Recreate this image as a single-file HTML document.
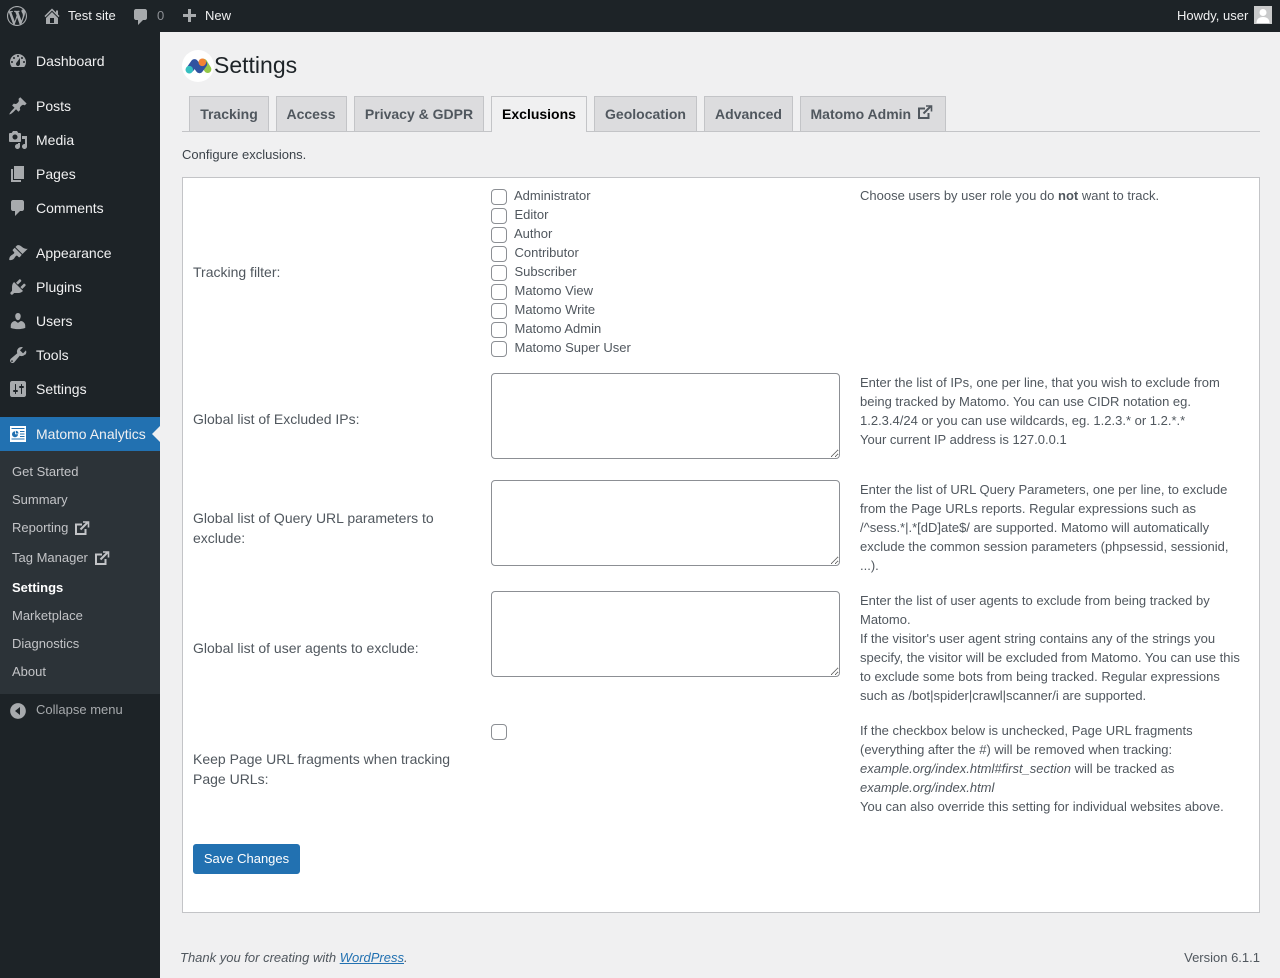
<!DOCTYPE html>
<html lang="en"><head><meta charset="utf-8"><title>Settings</title>
<style>
html,body{margin:0;padding:0;width:1280px;height:978px;overflow:hidden;background:#f0f0f1;font-family:"Liberation Sans",sans-serif;font-size:13px;color:#50575e}
.a{position:absolute;white-space:nowrap}
#bar{position:absolute;left:0;top:0;width:1280px;height:32px;background:#1d2327}
#side{position:absolute;left:0;top:32px;width:160px;height:946px;background:#1d2327}
#sub{position:absolute;left:0;top:451px;width:160px;height:243px;background:#2c3338}
#cur{position:absolute;left:0;top:417px;width:160px;height:34px;background:#2271b1}
.bt{font-size:13px;line-height:20px;color:#f0f0f1}
.m{left:36px;font-size:14px;line-height:20px;color:#f0f0f1}
.s{left:12px;font-size:13px;line-height:18px;color:#c3c4c7}
svg{position:absolute;overflow:visible}
.i{width:20px;height:20px;left:8px;fill:#a7aaad;fill-rule:evenodd}
.b{width:20px;height:20px;fill:#a7aaad;fill-rule:evenodd}
.tab{position:absolute;top:96px;height:35px;box-sizing:border-box;border:1px solid #c3c4c7;border-bottom:0;background:#dcdcde;font-size:14px;font-weight:bold;line-height:35px;text-align:center;color:#50575e;white-space:nowrap}
.tab.on{background:#f0f0f1;color:#000;height:36px}
#line{position:absolute;left:182px;top:131px;width:1078px;height:1px;background:#c3c4c7}
#box{position:absolute;left:182px;top:177px;width:1078px;height:736px;box-sizing:border-box;background:#fff;border:1px solid #c3c4c7}
.l{left:193px;font-size:14px;line-height:20px;color:#50575e}
.c{left:514px;font-size:13px;line-height:19px;color:#50575e}
.c2{left:514.5px}
.d{left:860px;font-size:13px;line-height:19px;color:#50575e}
input[type=checkbox]{position:absolute;left:491px;margin:0;width:16px;height:16px;box-sizing:border-box;appearance:none;-webkit-appearance:none;background:#fff;border:1px solid #8c8f94;border-radius:4px}
textarea{position:absolute;left:491px;width:349px;height:86px;margin:0;box-sizing:border-box;background:#fff;border:1px solid #8c8f94;border-radius:4px;padding:2px 6px}
#save{position:absolute;left:193px;top:844px;width:107px;height:30px;box-sizing:border-box;background:#2271b1;border:1px solid #2271b1;border-radius:3px;color:#fff;font:13px/28px "Liberation Sans",sans-serif;text-align:center;padding:0}
a{color:#2271b1}
</style></head><body>
<div id="bar"></div><div id="side"></div><div id="sub"></div><div id="cur"></div>

<svg class="b" style="left:7px;top:5.5px" viewBox="0 0 20 20"><path d="M20 10c0-5.510-4.490-10-10-10C4.480 0 0 4.490 0 10c0 5.520 4.480 10 10 10 5.510 0 10-4.480 10-10zM7.780 15.370L4.370 6.220c.55-.02 1.170-.08 1.170-.08.5-.06.44-1.130-.06-1.110 0 0-1.450.11-2.370.11-.18 0-.37 0-.58-.01C4.120 2.690 6.870 1.070 10 1.070c2.330 0 4.450.87 6.050 2.340-.68-.11-1.650.39-1.650 1.580 0 .74.45 1.360.9 2.100.35.610.55 1.360.55 2.460 0 1.490-1.400 5-1.400 5l-3.030-8.370c.54-.02.82-.17.82-.17.5-.05.44-1.250-.06-1.220 0 0-1.440.12-2.380.12-.87 0-2.330-.12-2.330-.12-.5-.03-.56 1.200-.06 1.220l.92.080 1.260 3.410zM17.410 10c.24-.64.740-1.870.43-4.250.7 1.290 1.050 2.710 1.050 4.250 0 3.290-1.730 6.240-4.400 7.780.97-2.590 1.940-5.190 2.920-7.780zM6.100 18.090C3.120 16.650 1.110 13.530 1.110 10c0-1.300.23-2.480.72-3.590C3.250 10.300 4.670 14.200 6.100 18.090zm4.030-6.630l2.580 6.980c-.86.29-1.760.45-2.710.45-.79 0-1.570-.11-2.290-.33.81-2.380 1.620-4.740 2.420-7.100z"/></svg>
<svg class="b" style="left:42px;top:6px" viewBox="0 0 20 20"><path d="M16 8.500l1.530 1.530-1.060 1.060L10 4.620l-6.470 6.470-1.060-1.060L10 2.500l4 4v-2h2v4zm-6-2.460l6 5.990V18H4v-5.970zM12 17v-5H8v5h4z"/></svg>
<div class="a bt" style="left:68px;top:6px">Test site</div>
<svg class="b" style="left:131px;top:7px" viewBox="0 0 20 20"><path d="M5 2h9c1.100 0 2 .9 2 2v7c0 1.100-.9 2-2 2h-2l-5 5v-5H5c-1.100 0-2-.9-2-2V4c0-1.100.9-2 2-2z"/></svg>
<div class="a bt" style="left:157px;top:6px;color:#8c8f94">0</div>
<svg class="b" style="left:179px;top:7px" viewBox="0 0 20 20"><path d="M17 7v3h-5v5H9v-5H4V7h5V2h3v5h5z"/></svg>
<div class="a bt" style="left:205px;top:6px">New</div>
<div class="a bt" style="left:1177px;top:6px">Howdy, user</div>
<svg style="left:1254px;top:6px;width:18px;height:18px" viewBox="0 0 18 18"><rect width="18" height="18" fill="#c9cacb"/><circle cx="9" cy="6.500" r="3.500" fill="#fff"/><path d="M2.500 17c0-4 2.500-6 6.500-6s6.500 2 6.500 6z" fill="#fff"/></svg>

<svg class="i" style="top:51px" viewBox="0 0 20 20"><path d="M3.760 16h12.480c1.100-1.370 1.760-3.110 1.760-5 0-4.420-3.580-8-8-8s-8 3.580-8 8c0 1.890.66 3.630 1.760 5zM10 4c.55 0 1 .45 1 1s-.45 1-1 1-1-.45-1-1 .45-1 1-1zM6 6c.55 0 1 .45 1 1s-.45 1-1 1-1-.45-1-1 .45-1 1-1zm8 0c.55 0 1 .45 1 1s-.45 1-1 1-1-.45-1-1 .45-1 1-1zm-5.370 5.550L12 7v6c0 1.100-.9 2-2 2s-2-.9-2-2c0-.57.24-1.080.63-1.450zM4 10c.55 0 1 .45 1 1s-.45 1-1 1-1-.45-1-1 .45-1 1-1zm12 0c.55 0 1 .45 1 1s-.45 1-1 1-1-.45-1-1 .45-1 1-1z"/></svg>
<div class="a m" style="top:51px">Dashboard</div>
<svg class="i" style="top:96px" viewBox="0 0 20 20"><path d="M10.440 3.020l1.820-1.820 6.360 6.350-1.830 1.820c-1.050-.68-2.480-.57-3.410.36l-.75.75c-.92.93-1.040 2.350-.35 3.410l-1.830 1.820-2.410-2.410-2.800 2.790c-.42.42-3.380 2.710-3.800 2.290s1.860-3.390 2.280-3.810l2.790-2.790L4.100 9.360l1.830-1.820c1.050.69 2.480.57 3.400-.36l.75-.75c.93-.92 1.050-2.350.36-3.410z"/></svg>
<div class="a m" style="top:96px">Posts</div>
<svg class="i" style="top:130px" viewBox="0 0 20 20"><path d="M13 11V4c0-.55-.45-1-1-1h-1.670L9 1H5L3.670 3H2c-.55 0-1 .45-1 1v7c0 .55.45 1 1 1h10c.55 0 1-.45 1-1zM7 4.500c1.380 0 2.500 1.120 2.500 2.500S8.380 9.500 7 9.500 4.500 8.380 4.500 7 5.620 4.500 7 4.500zM14 6h5v10.500c0 1.380-1.120 2.500-2.500 2.500S14 17.880 14 16.500s1.120-2.500 2.500-2.500c.17 0 .34.02.5.050V9h-3V6zm-4 8.050V13h2v3.500c0 1.380-1.120 2.500-2.500 2.500S7 17.880 7 16.500 8.120 14 9.500 14c.17 0 .34.02.5.050z"/></svg>
<div class="a m" style="top:130px">Media</div>
<svg class="i" style="top:164px" viewBox="0 0 20 20"><path d="M6 15V2h10v13H6zm-1 1h8v2H3V5h2v11z"/></svg>
<div class="a m" style="top:164px">Pages</div>
<svg class="i" style="top:198px" viewBox="0 0 20 20"><path d="M5 2h9c1.100 0 2 .9 2 2v7c0 1.100-.9 2-2 2h-2l-5 5v-5H5c-1.100 0-2-.9-2-2V4c0-1.100.9-2 2-2z"/></svg>
<div class="a m" style="top:198px">Comments</div>
<svg class="i" style="top:243px" viewBox="0 0 20 20"><path d="M14.480 11.060L7.410 3.990l1.500-1.500c.5-.56 2.300-.47 3.510.32 1.210.8 1.430 1.280 2.910 2.100 1.180.64 2.450 1.260 4.450.85zm-.71.71L6.700 4.700 4.930 6.470c-.39.39-.39 1.020 0 1.410l1.060 1.060c.39.39.39 1.030 0 1.420-.6.6-1.430 1.110-2.210 1.690-.35.26-.7.530-1.010.84C1.430 13.710.96 16.650 1.340 17.040s3.330-.09 4.150-.91c.31-.31.58-.66.84-1.010.58-.78 1.090-1.610 1.690-2.210.39-.39 1.030-.39 1.420 0l1.060 1.060c.39.39 1.020.39 1.410 0z"/></svg>
<div class="a m" style="top:243px">Appearance</div>
<svg class="i" style="top:277px" viewBox="0 0 20 20"><path d="M13.110 4.360L9.870 7.600 8 5.730l3.240-3.240c.35-.34 1.050-.2 1.560.32.52.51.66 1.210.31 1.550zm-8 1.770l.91-1.120 9.010 9.010-1.190.84c-.71.71-2.630 1.160-3.820 1.160H6.140L4.900 17.260c-.59.59-1.540.59-2.120 0-.59-.58-.59-1.530 0-2.120l1.240-1.240v-3.880c0-1.130.4-3.190 1.090-3.890zm7.260 3.970l3.240-3.240c.34-.35 1.040-.21 1.550.31.520.51.66 1.210.31 1.550l-3.240 3.250z"/></svg>
<div class="a m" style="top:277px">Plugins</div>
<svg class="i" style="top:311px" viewBox="0 0 20 20"><path d="M10 9.250c-2.270 0-2.730-3.440-2.730-3.440C7 4.020 7.820 2 9.970 2c2.160 0 2.980 2.020 2.710 3.810 0 0-.41 3.440-2.680 3.440zm0 2.570L12.720 10c2.390 0 4.520 2.330 4.520 4.530v2.490s-3.650 1.130-7.240 1.130c-3.650 0-7.240-1.130-7.240-1.130v-2.490c0-2.250 1.940-4.480 4.470-4.480z"/></svg>
<div class="a m" style="top:311px">Users</div>
<svg class="i" style="top:345px" viewBox="0 0 20 20"><path d="M16.680 9.770c-1.340 1.340-3.300 1.670-4.950.99l-5.410 6.520c-.99.99-2.590.99-3.570 0-.99-.98-.99-2.580 0-3.570l6.520-5.420c-.68-1.650-.35-3.610.99-4.950 1.280-1.280 3.120-1.640 4.730-1.080l-3.030 3.030 3.080 3.080 2.900-2.990c.69 1.620.35 3.490-.76 4.390zM4 15.200a.9.9 0 1 0 0 1.800.9.9 0 0 0 0-1.800z"/></svg>
<div class="a m" style="top:345px">Tools</div>
<svg class="i" style="top:379px" viewBox="0 0 20 20"><path d="M18 16V4c0-1.100-.9-2-2-2H4c-1.100 0-2 .9-2 2v12c0 1.100.9 2 2 2h12c1.100 0 2-.9 2-2zM8 11h1c.55 0 1 .45 1 1s-.45 1-1 1H8v1.500c0 .28-.22.5-.5.5s-.5-.22-.5-.5V13H6c-.55 0-1-.45-1-1s.45-1 1-1h1V5.500c0-.28.22-.5.5-.5s.5.22.5.5V11zm5-2h-1c-.55 0-1-.45-1-1s.45-1 1-1h1V5.500c0-.28.22-.5.5-.5s.5.22.5.5V7h1c.55 0 1 .45 1 1s-.45 1-1 1h-1v5.500c0 .28-.22.5-.5.5s-.5-.22-.5-.5V9z"/></svg>
<div class="a m" style="top:379px">Settings</div>
<svg style="left:10px;top:426px;width:16px;height:16px" viewBox="0 0 16 16"><rect width="16" height="16" fill="#fff"/><rect x="1.500" y="2" width="13" height="1" fill="#2271b1"/><path d="M5 5.200a3 3 0 1 0 3 3H5z" fill="#2271b1"/><path d="M5.800 4.800a3 3 0 0 1 2.700 2.700H5.800z" fill="#2271b1"/><path d="M10 5.500h4.500M10 8h4.500M10 10.500h4.500M1.500 13h13" stroke="#2271b1" stroke-width="1"/></svg>
<div class="a m" style="top:424px">Matomo Analytics</div>
<div class="a" style="left:152px;top:426px;width:0;height:0;border:8px solid transparent;border-left:0;border-right-color:#f0f0f1"></div>

<div class="a s" style="top:463px">Get Started</div>
<div class="a s" style="top:491px">Summary</div>
<div class="a s" style="top:519px">Reporting</div>
<svg style="left:75px;top:521px;width:14px;height:14px" viewBox="0 0 14 14" fill="none" stroke="#c3c4c7" stroke-width="2"><path d="M7 3.500H1V13h9.500V8"/><path d="M5.500 8.500L12.500 1.500"/><path d="M8 1h5.500v5.500" stroke-width="1.600"/></svg>
<div class="a s" style="top:549px">Tag Manager</div>
<svg style="left:95px;top:551px;width:14px;height:14px" viewBox="0 0 14 14" fill="none" stroke="#c3c4c7" stroke-width="2"><path d="M7 3.500H1V13h9.500V8"/><path d="M5.500 8.500L12.500 1.500"/><path d="M8 1h5.500v5.500" stroke-width="1.600"/></svg>
<div class="a s" style="top:579px;color:#fff;font-weight:bold">Settings</div>
<div class="a s" style="top:607px">Marketplace</div>
<div class="a s" style="top:635px">Diagnostics</div>
<div class="a s" style="top:663px">About</div>
<svg class="i" style="top:701px" viewBox="0 0 20 20"><path d="M10 2.160c4.330 0 7.840 3.510 7.840 7.840s-3.510 7.840-7.840 7.840S2.160 14.330 2.160 10 5.670 2.160 10 2.160zM12 14V6l-5 4z"/></svg>
<div class="a s" style="left:36px;top:701px;color:#a7aaad">Collapse menu</div>

<svg style="left:182px;top:50px;width:32px;height:32px" viewBox="0 0 32 32"><circle cx="16" cy="16" r="16" fill="#fff"/><path d="M21.500 12.500L25.700 19.300" stroke="#95c748" stroke-width="7.400" stroke-linecap="round" fill="none"/><path d="M8.500 18.500L12.500 12.800L17.500 19.500L21.500 14" stroke="#3152a0" stroke-width="7.400" stroke-linecap="round" stroke-linejoin="round" fill="none"/><circle cx="7.300" cy="19.700" r="3.800" fill="#35bfc0"/><circle cx="20.300" cy="12.300" r="3.800" fill="#f38334"/></svg>
<div class="a" style="left:214px;top:50px;font-size:23px;line-height:30px;color:#1d2327">Settings</div>

<div class="tab" style="left:189px;width:80px">Tracking</div>
<div class="tab" style="left:276px;width:71px;padding-right:1px">Access</div>
<div class="tab" style="left:354px;width:130px">Privacy &amp; GDPR</div>
<div id="line"></div>
<div class="tab on" style="left:491px;width:96px">Exclusions</div>
<div class="tab" style="left:594px;width:103px">Geolocation</div>
<div class="tab" style="left:704px;width:89px">Advanced</div>
<div class="tab" style="left:800px;width:146px;text-align:left;padding-left:9.500px">Matomo Admin</div>
<svg style="left:918px;top:105px;width:14px;height:14px" viewBox="0 0 14 14" fill="none" stroke="#50575e" stroke-width="2"><path d="M7 3.500H1V13h9.500V8"/><path d="M5.500 8.500L12.500 1.500"/><path d="M8 1h5.500v5.500" stroke-width="1.600"/></svg>

<div class="a" style="left:182px;top:145px;line-height:19px;color:#3c434a">Configure exclusions.</div>

<div id="box"></div>

<div class="a l" style="top:262px">Tracking filter:</div>
<input type="checkbox" style="top:189px"><div class="a c" style="top:186px">Administrator</div>
<input type="checkbox" style="top:208px"><div class="a c c2" style="top:205px">Editor</div>
<input type="checkbox" style="top:227px"><div class="a c" style="top:224px">Author</div>
<input type="checkbox" style="top:246px"><div class="a c c2" style="top:243px">Contributor</div>
<input type="checkbox" style="top:265px"><div class="a c c2" style="top:262px">Subscriber</div>
<input type="checkbox" style="top:284px"><div class="a c c2" style="top:281px">Matomo View</div>
<input type="checkbox" style="top:303px"><div class="a c c2" style="top:300px">Matomo Write</div>
<input type="checkbox" style="top:322px"><div class="a c c2" style="top:319px">Matomo Admin</div>
<input type="checkbox" style="top:341px"><div class="a c c2" style="top:338px">Matomo Super User</div>
<div class="a d" style="top:186px">Choose users by user role you do <b>not</b> want to track.</div>

<div class="a l" style="top:409px">Global list of Excluded IPs:</div>
<textarea style="top:373px"></textarea>
<div class="a d" style="top:373px">Enter the list of IPs, one per line, that you wish to exclude from<br>being tracked by Matomo. You can use CIDR notation eg.<br>1.2.3.4/24 or you can use wildcards, eg. 1.2.3.* or 1.2.*.*<br>Your current IP address is 127.0.0.1</div>

<div class="a l" style="top:508px">Global list of Query URL parameters to<br>exclude:</div>
<textarea style="top:480px"></textarea>
<div class="a d" style="top:480px">Enter the list of URL Query Parameters, one per line, to exclude<br>from the Page URLs reports. Regular expressions such as<br>/^sess.*|.*[dD]ate$/ are supported. Matomo will automatically<br>exclude the common session parameters (phpsessid, sessionid,<br>...).</div>

<div class="a l" style="top:638px">Global list of user agents to exclude:</div>
<textarea style="top:591px"></textarea>
<div class="a d" style="top:591px">Enter the list of user agents to exclude from being tracked by<br>Matomo.<br>If the visitor's user agent string contains any of the strings you<br>specify, the visitor will be excluded from Matomo. You can use this<br>to exclude some bots from being tracked. Regular expressions<br>such as /bot|spider|crawl|scanner/i are supported.</div>

<div class="a l" style="top:749px">Keep Page URL fragments when tracking<br>Page URLs:</div>
<input type="checkbox" style="top:724px">
<div class="a d" style="top:721px">If the checkbox below is unchecked, Page URL fragments<br>(everything after the #) will be removed when tracking:<br><i>example.org/index.html#first_section</i> will be tracked as<br><i>example.org/index.html</i><br>You can also override this setting for individual websites above.</div>

<button id="save" type="button">Save Changes</button>

<div class="a" style="left:180px;top:948px;line-height:19px;color:#50575e;font-style:italic">Thank you for creating with <a href="#">WordPress</a>.</div>
<div class="a" style="right:20px;top:948px;line-height:19px;color:#50575e">Version 6.1.1</div>
</body></html>
